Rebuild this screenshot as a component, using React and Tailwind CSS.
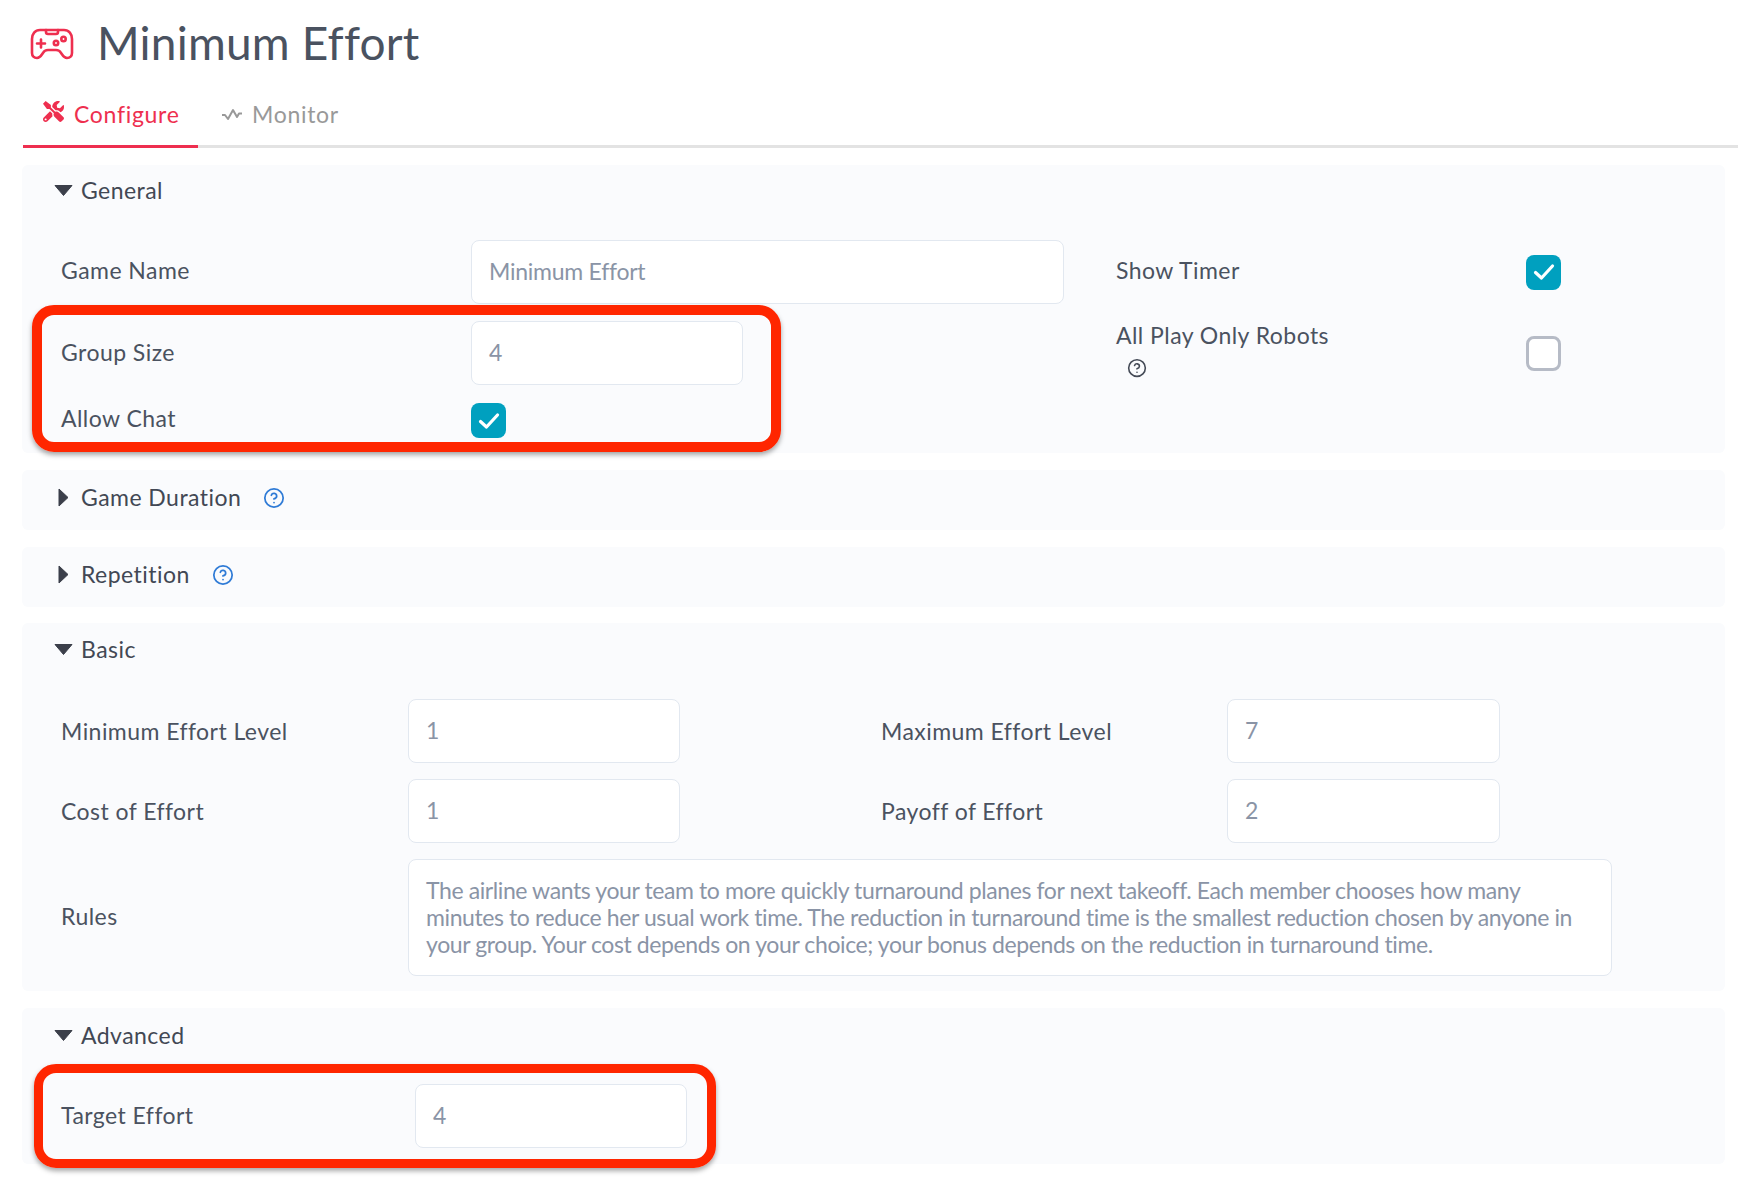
import React from "react";
import { CircleHelp } from "lucide-react";
import { FaTools } from "react-icons/fa";

function Gamepad() {
  return (
    <svg width="44" height="32" viewBox="0 0 44 32" fill="none" stroke="#ee2f4f" strokeWidth="2.600" strokeLinecap="round" strokeLinejoin="round">
      <path d="M10 2H34C39 2 42 6 42 11V25C42 28 40 30 37 30C34 30 33 28 31 25C30 23 28 22 26 22H18C16 22 14 23 13 25C11 28 10 30 7 30C4 30 2 28 2 25V11C2 6 5 2 10 2Z" />
      <path d="M16 2V4A2 2 0 0 0 18 6H26A2 2 0 0 0 28 4V2" />
      <path d="M7 15.500H15M11 11.500V19.500" />
      <circle cx="26" cy="15" r="2.200" />
      <circle cx="33.500" cy="11" r="2.200" />
    </svg>
  );
}

function Pulse() {
  return (
    <svg width="22" height="14" viewBox="0 0 22 14" fill="none" stroke="#999999" strokeWidth="2" strokeLinejoin="round" className="mr-[9px] -translate-y-[1px]">
      <path d="M1 8H4L7 12L12 3L16 10L18 6.500H21" />
    </svg>
  );
}

function Caret({ open }) {
  return (
    <span className="flex w-[30px] shrink-0 justify-center pr-[5px]">
      {open ? (
        <svg width="19" height="11" viewBox="0 0 19 11"><path d="M1 0.500H18L9.500 10.500Z" fill="#3b3f4a" stroke="#3b3f4a" strokeLinejoin="round" /></svg>
      ) : (
        <svg width="11" height="19" viewBox="0 0 11 19"><path d="M1 1L10 9.500L1 18Z" fill="#3b3f4a" stroke="#3b3f4a" strokeLinejoin="round" /></svg>
      )}
    </span>
  );
}

function Field({ children, className }) {
  return (
    <div className={`flex h-[64px] items-center rounded-lg border border-[#e2e8f0] bg-white px-[17px] pb-[1px] text-[23px] tracking-[-0.25px] text-[#8a94a6] ${className}`}>
      {children}
    </div>
  );
}

function Check({ checked }) {
  return checked ? (
    <span className="flex h-[35px] w-[35px] items-center justify-center rounded-lg bg-[#00a0bf]">
      <svg width="22" height="18" viewBox="0 0 22 18" fill="none" stroke="white" strokeWidth="3.200" strokeLinecap="round" strokeLinejoin="round">
        <path d="M2.500 9.500L8.500 15L19.500 3" />
      </svg>
    </span>
  ) : (
    <span className="block h-[35px] w-[35px] rounded-lg border-[3px] border-[#b6bbc6] bg-white" />
  );
}

function Header({ title, open, help, shift }) {
  return (
    <div className={`flex h-[54px] items-center pl-[29px] text-[23px] tracking-[0.45px] text-[#424854] ${shift}`}>
      <Caret open={open} />
      <span>{title}</span>
      {help && <CircleHelp size={22} color="#2f7bd6" strokeWidth={1.900} className="ml-[22px]" />}
    </div>
  );
}

function Section({ children, className }) {
  return <section className={`rounded-md bg-[#fafbfd] ${className}`}>{children}</section>;
}

function Label({ children, className }) {
  return <div className={`text-[23px] tracking-[0.45px] text-[#4a5260] ${className}`}>{children}</div>;
}

function BasicRow({ left, lv, right, rv }) {
  return (
    <div className="flex items-center">
      <Label className="w-[347px] pt-[1px]">{left}</Label>
      <Field className="w-[272px]">{lv}</Field>
      <Label className="ml-[201px] w-[346px] pt-[1px]">{right}</Label>
      <Field className="w-[273px]">{rv}</Field>
    </div>
  );
}

export default function App() {
  return (
    <div className="min-h-[1190px] bg-white pl-[22px] font-['Lato','Liberation_Sans',sans-serif]">
      <header className="flex h-[88px] items-center pl-[8px]">
        <Gamepad />
        <h1 className="ml-[23px] pb-[2px] text-[46px] leading-none tracking-[0.2px] text-[#4a5260]">Minimum Effort</h1>
      </header>

      <nav className="ml-[1px] mr-[4px] flex h-[60px] border-b-[3px] border-[#e3e3e3] text-[23px] tracking-[0.7px]">
        <div className="-mb-[3px] flex h-[60px] w-[175px] items-center border-b-[3px] border-[#ee2f4f] pb-[4px] pl-[20px] text-[#ee2f4f]">
          <FaTools size={21} className="mr-[10px] -translate-y-[3px]" />
          Configure
        </div>
        <div className="flex items-center pb-[4px] pl-[23px] text-[#999999]">
          <Pulse />
          Monitor
        </div>
      </nav>

      <main className="mr-[17px] mt-[17px] flex flex-col gap-[17px]">
        <Section className="relative pb-[15px]">
          <Header title="General" open shift="pb-[3px]" />
          <div className="flex pt-[21px]">
            <div className="flex w-[1094px] flex-col gap-[17px] pl-[39px]">
              <div className="flex items-center">
                <Label className="w-[410px] pb-[3px]">Game Name</Label>
                <Field className="w-[593px]">Minimum Effort</Field>
              </div>
              <div className="flex items-center">
                <Label className="w-[410px] pb-[1px]">Group Size</Label>
                <Field className="w-[272px]">4</Field>
              </div>
              <div className="flex h-[36px] items-center">
                <Label className="w-[410px] pb-[3px]">Allow Chat</Label>
                <span className="pt-[1px]"><Check checked /></span>
              </div>
            </div>
            <div className="flex w-[445px] flex-col">
              <div className="flex h-[64px] items-center justify-between">
                <Label className="pb-[3px]">Show Timer</Label>
                <Check checked />
              </div>
              <div className="mt-[17px] flex items-start justify-between">
                <div className="-mt-[1px]">
                  <Label className="pb-[3px] leading-[30px]">All Play Only Robots</Label>
                  <CircleHelp size={20} color="#444a56" strokeWidth={1.900} className="ml-[11px] mt-[5px]" />
                </div>
                <span className="mt-[15px]"><Check /></span>
              </div>
            </div>
          </div>
          <div className="pointer-events-none absolute left-[10px] top-[140px] h-[147px] w-[749px] rounded-[22px] border-[10px] border-[#ff2600] shadow-[0_3px_5px_rgba(0,0,0,0.35)]" />
        </Section>

        <Section className="pb-[6px]">
          <Header title="Game Duration" help shift="pt-[1px]" />
        </Section>

        <Section className="pb-[6px]">
          <Header title="Repetition" help shift="pt-[1px]" />
        </Section>

        <Section className="-mt-[1px] pb-[15px]">
          <Header title="Basic" open shift="pb-[1px]" />
          <div className="flex flex-col gap-[16px] pl-[39px] pt-[22px]">
            <BasicRow left="Minimum Effort Level" lv="1" right="Maximum Effort Level" rv="7" />
            <BasicRow left="Cost of Effort" lv="1" right="Payoff of Effort" rv="2" />
            <div className="flex items-center">
              <Label className="w-[347px] pb-[3px]">Rules</Label>
              <div className="h-[117px] w-[1204px] rounded-lg border border-[#e2e8f0] bg-white px-[17px] py-[17px] text-[23px] leading-[27px] tracking-[-0.4px] text-[#8a94a6]">
                The airline wants your team to more quickly turnaround planes for next takeoff. Each member chooses how many<br />
                minutes to reduce her usual work time. The reduction in turnaround time is the smallest reduction chosen by anyone in<br />
                your group. Your cost depends on your choice; your bonus depends on the reduction in turnaround time.
              </div>
            </div>
          </div>
        </Section>

        <Section className="relative pb-[16px]">
          <Header title="Advanced" open shift="pt-[1px]" />
          <div className="flex items-center pl-[39px] pt-[22px]">
            <Label className="w-[354px] pb-[1px]">Target Effort</Label>
            <Field className="w-[272px]">4</Field>
          </div>
          <div className="pointer-events-none absolute left-[12px] top-[56px] h-[104px] w-[682px] rounded-[22px] border-[9px] border-[#ff2600] shadow-[0_3px_5px_rgba(0,0,0,0.35)]" />
        </Section>
      </main>
    </div>
  );
}
